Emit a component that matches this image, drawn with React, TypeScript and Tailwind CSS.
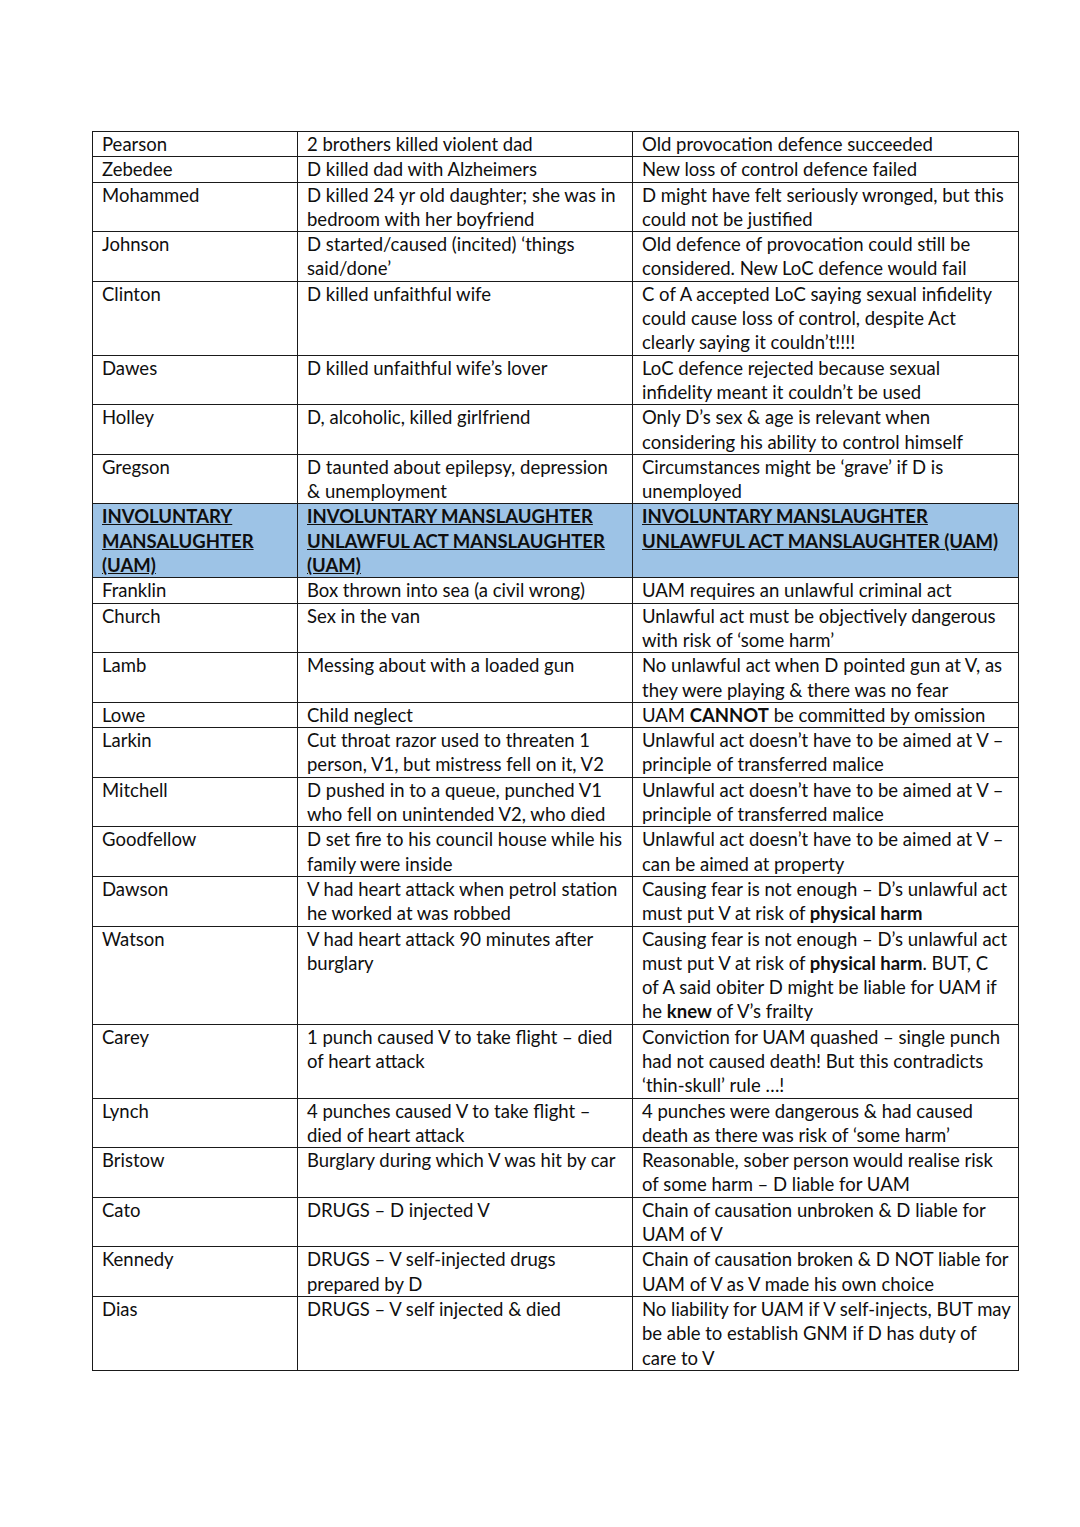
import React from "react";

type Row = { a: string[]; b: string[]; c: string[]; header?: boolean };

const rows: Row[] = [
  { a: ["Pearson"], b: ["2 brothers killed violent dad"], c: ["Old provocation defence succeeded"] },
  { a: ["Zebedee"], b: ["D killed dad with Alzheimers"], c: ["New loss of control defence failed"] },
  { a: ["Mohammed"], b: ["D killed 24 yr old daughter; she was in", "bedroom with her boyfriend"], c: ["D might have felt seriously wronged, but this", "could not be justified"] },
  { a: ["Johnson"], b: ["D started/caused (incited) \u2018things", "said/done\u2019"], c: ["Old defence of provocation could still be", "considered. New LoC defence would fail"] },
  { a: ["Clinton"], b: ["D killed unfaithful wife"], c: ["C of A accepted LoC saying sexual infidelity", "could cause loss of control, despite Act", "clearly saying it couldn\u2019t!!!!"] },
  { a: ["Dawes"], b: ["D killed unfaithful wife\u2019s lover"], c: ["LoC defence rejected because sexual", "infidelity meant it couldn\u2019t be used"] },
  { a: ["Holley"], b: ["D, alcoholic, killed girlfriend"], c: ["Only D\u2019s sex & age is relevant when", "considering his ability to control himself"] },
  { a: ["Gregson"], b: ["D taunted about epilepsy, depression", "& unemployment"], c: ["Circumstances might be \u2018grave\u2019 if D is", "unemployed"] },
  { header: true, a: ["INVOLUNTARY", "MANSALUGHTER", "(UAM)"], b: ["INVOLUNTARY MANSLAUGHTER", "UNLAWFUL ACT MANSLAUGHTER", "(UAM)"], c: ["INVOLUNTARY MANSLAUGHTER", "UNLAWFUL ACT MANSLAUGHTER (UAM)"] },
  { a: ["Franklin"], b: ["Box thrown into sea (a civil wrong)"], c: ["UAM requires an unlawful criminal act"] },
  { a: ["Church"], b: ["Sex in the van"], c: ["Unlawful act must be objectively dangerous", "with risk of \u2018some harm\u2019"] },
  { a: ["Lamb"], b: ["Messing about with a loaded gun"], c: ["No unlawful act when D pointed gun at V, as", "they were playing & there was no fear"] },
  { a: ["Lowe"], b: ["Child neglect"], c: ["UAM **CANNOT** be committed by omission"] },
  { a: ["Larkin"], b: ["Cut throat razor used to threaten 1", "person, V1, but mistress fell on it, V2"], c: ["Unlawful act doesn\u2019t have to be aimed at V \u2013", "principle of transferred malice"] },
  { a: ["Mitchell"], b: ["D pushed in to a queue, punched V1", "who fell on unintended V2, who died"], c: ["Unlawful act doesn\u2019t have to be aimed at V \u2013", "principle of transferred malice"] },
  { a: ["Goodfellow"], b: ["D set fire to his council house while his", "family were inside"], c: ["Unlawful act doesn\u2019t have to be aimed at V \u2013", "can be aimed at property"] },
  { a: ["Dawson"], b: ["V had heart attack when petrol station", "he worked at was robbed"], c: ["Causing fear is not enough \u2013 D\u2019s unlawful act", "must put V at risk of **physical harm**"] },
  { a: ["Watson"], b: ["V had heart attack 90 minutes after", "burglary"], c: ["Causing fear is not enough \u2013 D\u2019s unlawful act", "must put V at risk of **physical harm**. BUT, C", "of A said obiter D might be liable for UAM if", "he **knew** of V\u2019s frailty"] },
  { a: ["Carey"], b: ["1 punch caused V to take flight \u2013 died", "of heart attack"], c: ["Conviction for UAM quashed \u2013 single punch", "had not caused death! But this contradicts", "\u2018thin-skull\u2019 rule \u2026!"] },
  { a: ["Lynch"], b: ["4 punches caused V to take flight \u2013", "died of heart attack"], c: ["4 punches were dangerous & had caused", "death as there was risk of \u2018some harm\u2019"] },
  { a: ["Bristow"], b: ["Burglary during which V was hit by car"], c: ["Reasonable, sober person would realise risk", "of some harm \u2013 D liable for UAM"] },
  { a: ["Cato"], b: ["DRUGS \u2013 D injected V"], c: ["Chain of causation unbroken & D liable for", "UAM of V"] },
  { a: ["Kennedy"], b: ["DRUGS \u2013 V self-injected drugs", "prepared by D"], c: ["Chain of causation broken & D NOT liable for", "UAM of V as V made his own choice"] },
  { a: ["Dias"], b: ["DRUGS \u2013 V self injected & died"], c: ["No liability for UAM if V self-injects, BUT may", "be able to establish GNM if D has duty of", "care to V"] },
];

function Line({ text }: { text: string }) {
  const parts = text.split("**");
  return (
    <div className="whitespace-nowrap">
      {parts.map((p, i) =>
        i % 2 === 1 ? (
          <b key={i} className="font-bold">
            {p}
          </b>
        ) : (
          <span key={i}>{p}</span>
        )
      )}
    </div>
  );
}

function Cell({ lines, header }: { lines: string[]; header?: boolean }) {
  return (
    <td
      className={
        "border border-[#1a1a1a] align-top pl-[9px] pr-1 py-0 overflow-hidden " +
        (header ? "font-bold underline bg-[#9dc3e6]" : "")
      }
    >
      {lines.map((l, i) => (
        <Line key={i} text={l} />
      ))}
    </td>
  );
}

export default function App() {
  return (
    <div className="w-[1080px] min-h-[1527px] bg-white pt-[131px] pl-[92px]">
      <table
        className="table-fixed border-collapse w-[926px] text-[#0f0f0f] text-[18.5px] leading-[24.3px]"
        style={{ fontFamily: "Lato, 'Open Sans', sans-serif" }}
      >
        <colgroup>
          <col className="w-[205px]" />
          <col className="w-[335px]" />
          <col className="w-[386px]" />
        </colgroup>
        <tbody>
          {rows.map((r, i) => (
            <tr key={i}>
              <Cell lines={r.a} header={r.header} />
              <Cell lines={r.b} header={r.header} />
              <Cell lines={r.c} header={r.header} />
            </tr>
          ))}
        </tbody>
      </table>
    </div>
  );
}
